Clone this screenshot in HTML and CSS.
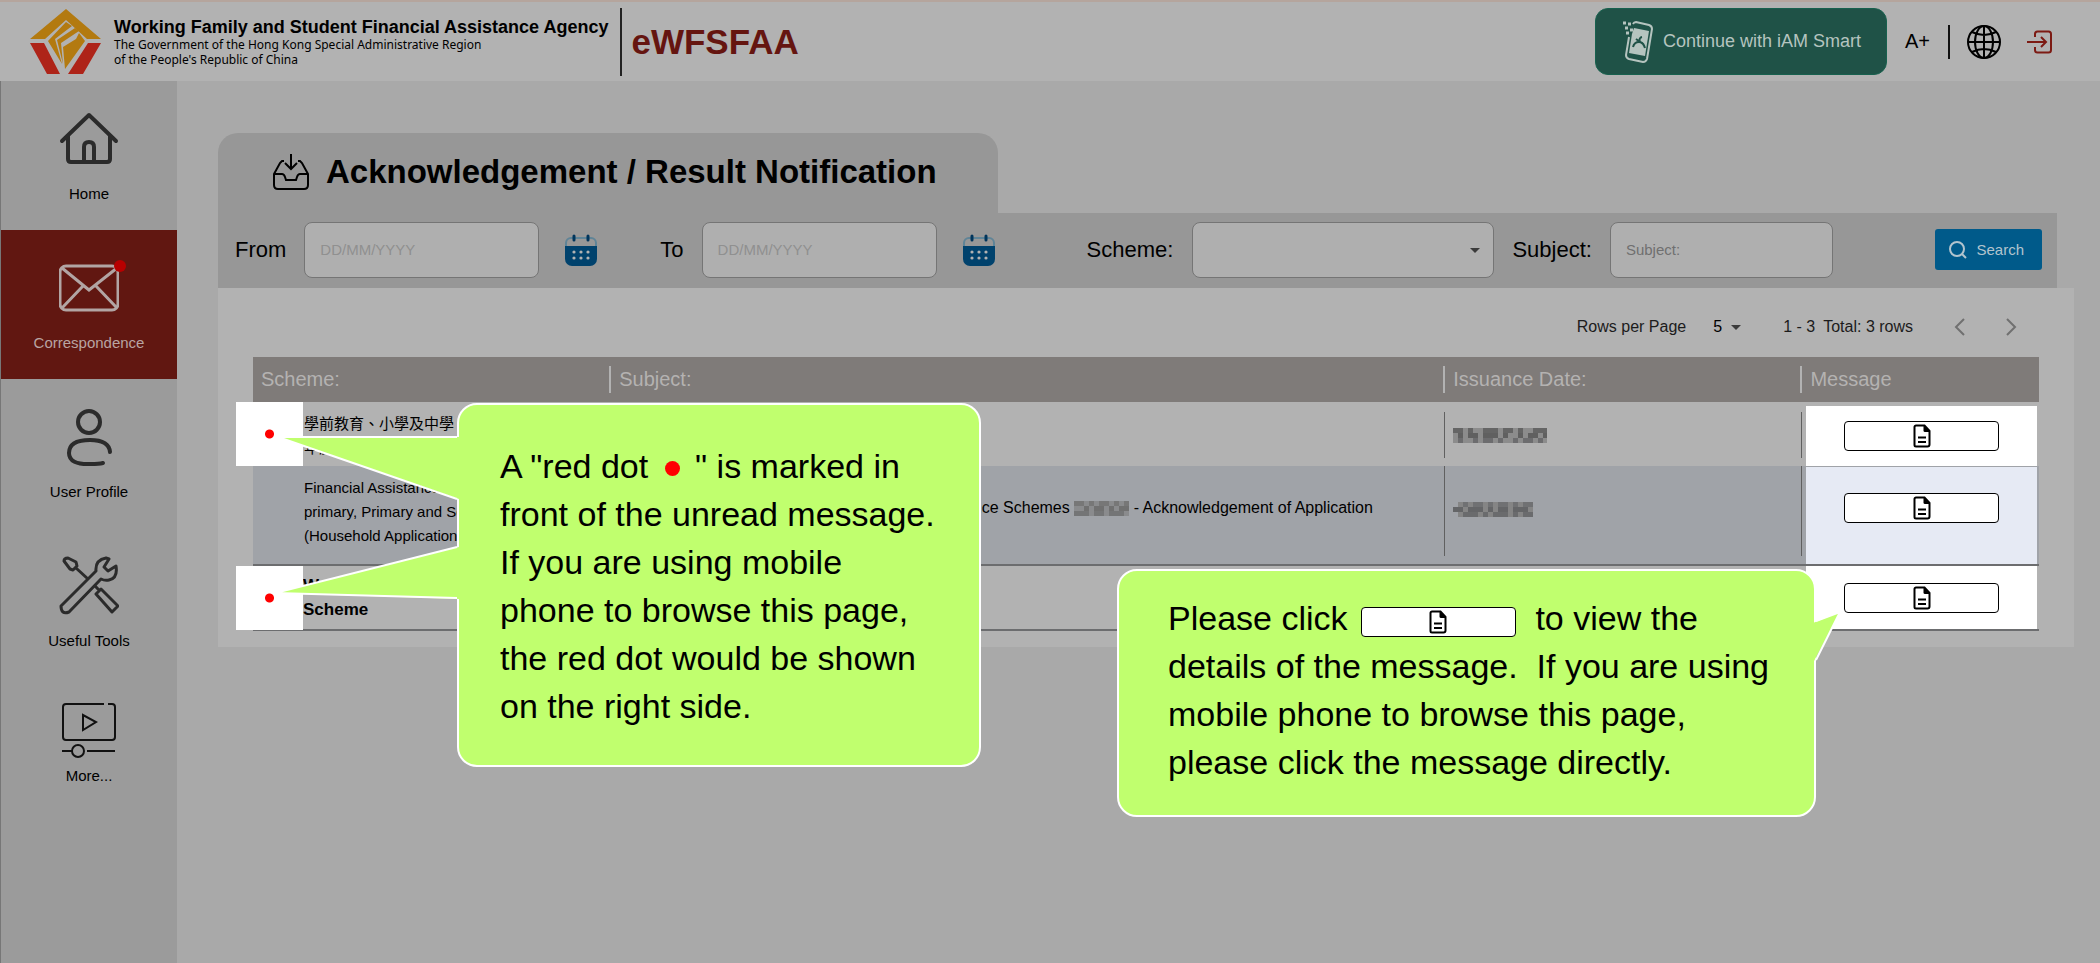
FILE: index.html
```html
<!DOCTYPE html>
<html lang="en">
<head>
    <meta charset="UTF-8">
    <title>eWFSFAA</title>
    <link rel="stylesheet" href="styles.css">
</head>
<body>

<svg class="defs" width="0" height="0">
    <symbol id="doc" viewBox="0 0 18 24">
        <path d="M3 1.500h8.500L16.500 7v13.500a2 2 0 0 1-2 2H3a1.500 1.500 0 0 1-1.500-1.500V3A1.500 1.500 0 0 1 3 1.500z" fill="none" stroke="#000" stroke-width="2"/>
        <path d="M10.500 1l6.500 7h-5a1.500 1.500 0 0 1-1.500-1.500z"/>
        <path d="M5 13.500h8M5 18h8" stroke="#000" stroke-width="2"/>
    </symbol>
    <symbol id="calendar" viewBox="0 0 32 32">
        <path d="M1 12V9a5 5 0 0 1 5-5h20a5 5 0 0 1 5 5v3" fill="none" stroke="#5f8497" stroke-width="2"/>
        <path d="M0 12h32v13a7 7 0 0 1-7 7H7a7 7 0 0 1-7-7z" fill="#00426d"/>
        <path d="M9 2v4M23 2v4" stroke="#00355c" stroke-width="3" stroke-linecap="round"/>
        <g fill="#b2b2b2"><circle cx="9" cy="18" r="1.600"/><circle cx="16" cy="18" r="1.600"/><circle cx="23" cy="18" r="1.600"/><circle cx="9" cy="24" r="1.600"/><circle cx="16" cy="24" r="1.600"/><circle cx="23" cy="24" r="1.600"/></g>
    </symbol>
</svg>

<header class="topbar">
    <svg class="logo" viewBox="0 0 72 66" width="72" height="66">
        <path d="M37 0L72 30H58L37 11L16 30H1z" fill="#b37a10"/>
        <path d="M1 34h14l16 31H18zM72 34H59L39 65h15z" fill="#ae2419"/>
        <path d="M37 13l6 4-17 13 7 25-14-23zM46 19l4 3-18 12 2 21-6-24zM50 24l6 8-20 28-2-22 13-8z" fill="#b37a10"/>
    </svg>
    <div class="agency">
        <strong>Working Family and Student Financial Assistance Agency</strong>
        <span>The Government of the Hong Kong Special Administrative Region</span>
        <span>of the People's Republic of China</span>
    </div>
    <div class="brand">eWFSFAA</div>
    <div class="top-actions">
        <button class="iam-btn">
            <svg viewBox="0 0 30 42" width="30" height="42" fill="none" stroke="#b5c4bf" stroke-width="2">
                <path d="M10 3q1-2 3-2l13 3q3 1 3 4l-5 30q-1 3-4 3L6 38q-3-1-3-4l3-18"/>
                <path d="M11 7l15 3-4 25-16-3 3-19z" fill="#b5c4bf" stroke="none"/>
                <path d="M10 26c1-4 4-5 6-5 4 0 5 3 6 6M13 18l7 5M19 16a3 3 0 1 0 1 6" stroke="#1f5247"/>
                <path d="M0 2h3M5 3h3M2 7h3M7 9h3M3 12h3" stroke-width="3"/>
                <path d="M11 36h5" stroke="#1f5247"/>
            </svg>
            Continue with iAM Smart
        </button>
        <button class="font-btn">A+</button>
        <button class="icon-btn globe" aria-label="Language">
            <svg viewBox="0 0 34 34" width="34" height="34" fill="none" stroke="#000" stroke-width="2">
                <circle cx="17" cy="17" r="16"/><ellipse cx="17" cy="17" rx="9" ry="16"/>
                <path d="M17 1v32M1 17h32M5 7q12 6 24 0M5 27q12-6 24 0"/>
            </svg>
        </button>
        <button class="icon-btn" aria-label="Logout">
            <svg viewBox="0 0 26 24" width="26" height="24" fill="none" stroke="#7c1a13" stroke-width="2">
                <path d="M8 7V4a2.500 2.500 0 0 1 2.500-2.500h11A2.500 2.500 0 0 1 24 4v16a2.500 2.500 0 0 1-2.500 2.500h-11A2.500 2.500 0 0 1 8 20v-3M0 12h19M14 7l5 5-5 5"/>
            </svg>
        </button>
    </div>
</header>

<div class="layout">
    <nav class="sidebar">
        <a href="#" class="nav-item">
            <svg viewBox="0 0 60 60" width="60" height="60" fill="none" stroke="#2b2b2b" stroke-width="4" stroke-linecap="round" stroke-linejoin="round">
                <path d="M3 32L30 6l27 26M9 27v23q0 3 3 3h36q3 0 3-3V27M25 53V38q0-5 5-5t5 5v15"/>
            </svg>
            Home
        </a>
        <a href="#" class="nav-item active">
            <svg viewBox="0 0 60 60" width="60" height="60" fill="none" stroke="#b2a5a4" stroke-width="3">
                <rect x="1" y="8" width="58" height="44" rx="6"/>
                <path d="M3 10l27 22L58 10M3 50l21-22M58 50L37 28"/>
            </svg>
            <i class="badge"></i>
            Correspondence
        </a>
        <a href="#" class="nav-item">
            <svg viewBox="0 0 60 60" width="60" height="60" fill="none" stroke="#2b2b2b" stroke-width="4" stroke-linecap="round">
                <circle cx="30" cy="15" r="11"/>
                <path d="M51 45q-1-12-20-12-21 0-21 13 0 12 22 11 8 0 12-1"/>
            </svg>
            User Profile
        </a>
        <a href="#" class="nav-item">
            <svg viewBox="0 0 60 60" width="60" height="60" fill="none" stroke="#2b2b2b" stroke-width="3" stroke-linejoin="round">
                <path d="M2 50L37 15Q36 4 47 2l3 1-5 8 4 4 8-5q2 12-7 14-4 1-8-1L10 56q-8 3-8-6z"/>
                <path d="M5 5q0-3 4-3l8 4 1 4-4 4-3-1zM17 12l12 11M35 29l5 5M37 38l5-5 17 17-6 6z"/>
            </svg>
            Useful Tools
        </a>
        <a href="#" class="nav-item more">
            <svg viewBox="0 0 60 60" width="60" height="60" fill="none" stroke="#111" stroke-width="2">
                <path d="M45 3H7Q4 3 4 6v30q0 3 3 3h46q3 0 3-3V6q0-3-3-3h-4M24 14v15l13-8zM3 50h10M28 50h28"/>
                <circle cx="19" cy="50" r="6"/>
            </svg>
            More...
        </a>
    </nav>

    <main>
        <h1 class="tab">
            <svg viewBox="0 0 36 36" width="36" height="36" fill="none" stroke="#000" stroke-width="2">
                <path d="M11 7H9L7 9 1 20v11q0 4 4 4h26q4 0 4-4V20L29 9l-2-2h-2M1 20h8q2 0 3 3l1 3h10l1-3q1-3 3-3h8M18 0v15M12 9l6 6 6-6"/>
            </svg>
            Acknowledgement / Result Notification
        </h1>

        <form class="filters">
            <label for="from">From</label>
            <input type="text" id="from" class="date" placeholder="DD/MM/YYYY">
            <button type="button" class="cal" aria-label="Pick from date"><svg width="32" height="32"><use href="#calendar"/></svg></button>
            <label for="to">To</label>
            <input type="text" id="to" class="date" placeholder="DD/MM/YYYY">
            <button type="button" class="cal cal-to" aria-label="Pick to date"><svg width="32" height="32"><use href="#calendar"/></svg></button>
            <label for="scheme">Scheme:</label>
            <div class="select-wrap scheme-wrap"><select id="scheme"><option></option></select></div>
            <label for="subject">Subject:</label>
            <input type="text" id="subject" placeholder="Subject:">
            <button type="button" class="search">
                <svg viewBox="0 0 18 18" width="18" height="18" fill="none" stroke="#b2c4ce" stroke-width="2"><circle cx="8" cy="8" r="7"/><path d="M13 13l4 4"/></svg>
                Search
            </button>
        </form>

        <section class="panel">
            <div class="pager">
                <label for="rows">Rows per Page</label>
                <div class="select-wrap rows-wrap"><select id="rows"><option>5</option></select></div>
                <span class="range">1 - 3</span>
                <span>Total: 3 rows</span>
                <button class="prev" aria-label="Previous page"><svg viewBox="0 0 12 18" width="12" height="18"><path d="M10 1L2 9l8 8"/></svg></button>
                <button class="next" aria-label="Next page"><svg viewBox="0 0 12 18" width="12" height="18"><path d="M2 1l8 8-8 8"/></svg></button>
            </div>

            <div class="table-wrap">
                <table>
                    <thead>
                        <tr><th class="c1">Scheme:</th><th class="c2">Subject:</th><th class="c3">Issuance Date:</th><th class="c4">Message</th></tr>
                    </thead>
                    <tbody>
                        <tr class="first">
                            <td class="scheme"><i class="spot"></i><span lang="zh-HK">學前教育、小學及中學<br>年度申請</span></td>
                            <td></td>
                            <td class="issued"><svg class="mosaic" viewBox="0 0 94 15" width="94" height="15" fill="none" stroke-width="5">
                                <path d="M0 2.500h94M0 7.500h94M0 12.500h94" stroke="#8c8c8c"/>
                                <path d="M0 2.500h94" stroke="#656565" stroke-dasharray="10 5 5 10 15 5"/>
                                <path d="M5 7.500h89" stroke="#606060" stroke-dasharray="5 5 10 5 15 5 5 10"/>
                                <path d="M5 12.500h89" stroke="#6c6c6e" stroke-dasharray="5 10 5 5 10 5"/>
                            </svg></td>
                            <td class="msg"><div><button aria-label="View message"><svg width="18" height="24"><use href="#doc"/></svg></button></div></td>
                        </tr>
                        <tr class="alt">
                            <td class="scheme">Financial Assistance Schemes for Pre-primary, Primary and Secondary Students (Household Application)</td>
                            <td class="subject">Pre-primary, Primary and Secondary Student Finance Schemes
                                <svg class="mosaic" viewBox="0 0 55 15" width="55" height="15" fill="none" stroke-width="5">
                                    <path d="M0 2.500h55M0 7.500h55M0 12.500h55" stroke="#8a8b8d"/>
                                    <path d="M0 2.500h55" stroke="#777" stroke-dasharray="10 5 5 5"/>
                                    <path d="M10 7.500h45" stroke="#707070" stroke-dasharray="5 5 10 5"/>
                                    <path d="M0 12.500h55" stroke="#747576" stroke-dasharray="15 5 10 5"/>
                                </svg>
                                - Acknowledgement of Application</td>
                            <td class="issued"><svg class="mosaic" viewBox="0 0 80 15" width="80" height="15" fill="none" stroke-width="5">
                                <path d="M5 2.500h75M0 7.500h80M5 12.500h75" stroke="#858585"/>
                                <path d="M10 2.500h70" stroke="#707173" stroke-dasharray="5 5 10 5"/>
                                <path d="M0 7.500h80" stroke="#646567" stroke-dasharray="10 5 15 5 5 5"/>
                                <path d="M10 12.500h70" stroke="#6a6b6d" stroke-dasharray="15 5 5 5"/>
                            </svg></td>
                            <td class="msg"><div><button aria-label="View message"><svg width="18" height="24"><use href="#doc"/></svg></button></div></td>
                        </tr>
                        <tr class="last">
                            <td class="scheme unread"><i class="spot"></i>Working Family Allowance<br>Scheme</td>
                            <td></td>
                            <td></td>
                            <td class="msg"><div><button aria-label="View message"><svg width="18" height="24"><use href="#doc"/></svg></button></div></td>
                        </tr>
                    </tbody>
                </table>

                <div class="bubble bubble-dot">
                    <svg class="tail" viewBox="0 0 186 170" width="186" height="170">
                        <path d="M184 5H3l181 62zM184 115L0 161l184 6z" fill="#c0ff6e"/>
                        <path d="M182 5H3l179 62M182 115L0 161l182 5" fill="none" stroke="#fff" stroke-width="2"/>
                    </svg>
                    A "red dot <i class="dot"></i> " is marked in<br>front of the unread message.<br>If you are using mobile<br>phone to browse this page,<br>the red dot would be shown<br>on the right side.
                </div>

                <div class="bubble bubble-click">
                    <svg class="tail" viewBox="0 0 32 54" width="32" height="54">
                        <path d="M0 12L27 1 0 52z" fill="#c0ff6e"/>
                        <path d="M3 10L27 1 3 49" fill="none" stroke="#fff" stroke-width="2"/>
                    </svg>
                    Please click <span class="sample"><svg width="18" height="24"><use href="#doc"/></svg></span> to view the<br>details of the message.&nbsp; If you are using<br>mobile phone to browse this page,<br>please click the message directly.
                </div>
            </div>
        </section>
    </main>
</div>

</body>
</html>
```
FILE: styles.css
```css
:root {
    --page: #a9a9a9;
    --panel: #b2b2b2;
    --bar: #979797;
    --side: #9b9b9b;
    --head: #7f7b79;
    --alt: #a0a3a8;
    --active: #611711;
    --green: #1f5247;
    --blue: #005a8a;
    --bubble: #c0ff6e;
    --red: #ff0000;
}

* {
    box-sizing: border-box;
}

body {
    margin: 0;
    min-height: 100vh;
    display: flex;
    flex-direction: column;
    background: var(--page);
    color: #000;
    font-family: "Liberation Sans", "Noto Sans CJK TC", Arial, sans-serif;
    font-size: 15px;
}

button, input, select {
    font-family: inherit;
    font-size: 15px;
}

button {
    padding: 0;
    border: none;
    background: none;
    color: inherit;
    cursor: pointer;
}

svg {
    display: block;
    flex: none;
}

.defs {
    position: absolute;
}

/* top bar */
.topbar {
    display: flex;
    align-items: center;
    height: 81px;
    padding: 0 47px 0 29px;
    border-top: 2px solid #b5a59d;
    background: var(--panel);
}

.agency {
    display: flex;
    flex-direction: column;
    margin-left: 13px;
    font-family: "Noto Sans", sans-serif;
    font-size: 12px;
    line-height: 15px;
}

.agency strong {
    font-family: "Liberation Sans", Arial, sans-serif;
    font-size: 18px;
    line-height: 20px;
}

.brand {
    margin-left: 12px;
    padding-left: 9px;
    border-left: 2px solid #222;
    color: #651510;
    font-size: 35px;
    font-weight: bold;
    line-height: 68px;
}

.top-actions {
    display: flex;
    align-items: center;
    margin-left: auto;
}

.iam-btn {
    display: flex;
    align-items: center;
    gap: 10px;
    height: 67px;
    padding: 0 25px 0 27px;
    border: 1px solid #17614e;
    border-radius: 13px;
    background: var(--green);
    color: #b5c4bf;
    font-size: 18px;
}

.font-btn {
    height: 34px;
    margin-left: 18px;
    padding-right: 18px;
    border-right: 2px solid #111;
    font-size: 20px;
}

.globe {
    margin: 0 26px 0 17px;
}

/* side menu */
.layout {
    display: flex;
    flex: 1;
}

.sidebar {
    width: 177px;
    flex: none;
    border-left: 1px solid #777;
    background: var(--side);
}

.nav-item {
    position: relative;
    display: flex;
    flex-direction: column;
    align-items: center;
    gap: 15px;
    height: 149px;
    padding-top: 28px;
    color: #000;
    line-height: 20px;
    text-decoration: none;
}

.nav-item.active {
    background: var(--active);
    color: #b9a4a2;
}

.nav-item.more {
    gap: 5px;
    padding-top: 24px;
}

.badge {
    position: absolute;
    top: 30px;
    left: 113px;
    width: 12px;
    height: 12px;
    border-radius: 50%;
    background: #b70000;
}

/* content */
main {
    flex: 1;
    min-width: 0;
    padding: 52px 26px 0 41px;
}

.tab {
    display: flex;
    align-items: center;
    gap: 17px;
    width: 780px;
    height: 80px;
    margin: 0;
    padding: 0 0 2px 55px;
    border-radius: 20px 20px 0 0;
    background: var(--bar);
    font-size: 33px;
}

.filters {
    display: flex;
    align-items: center;
    height: 75px;
    margin-right: 17px;
    padding: 0 15px 2px 17px;
    background: var(--bar);
}

.filters label {
    font-size: 22px;
}

.filters input, .filters select {
    height: 56px;
    padding: 0 15px;
    border: 1px solid #757575;
    border-radius: 8px;
    background: #afafaf;
}

.filters input {
    margin-left: 18px;
}

.filters input::placeholder {
    color: #707070;
    opacity: 1;
}

.filters .date {
    width: 235px;
}

.filters .date::placeholder {
    color: #909090;
}

.cal {
    margin: 0 63px 0 26px;
}

.filters .cal-to {
    margin-right: 92px;
}

.select-wrap {
    position: relative;
}

.select-wrap::after {
    content: "";
    position: absolute;
    top: 50%;
    right: 14px;
    margin-top: -2px;
    border: 5px solid transparent;
    border-top-color: #3b3b3b;
    border-bottom: none;
    pointer-events: none;
}

select {
    appearance: none;
}

.scheme-wrap {
    width: 302px;
    margin: 0 18px 0 19px;
}

.scheme-wrap select {
    width: 100%;
}

#subject {
    width: 223px;
}

.search {
    display: flex;
    align-items: center;
    gap: 9px;
    height: 41px;
    margin-left: auto;
    padding: 0 18px 0 14px;
    border-radius: 3px;
    background: var(--blue);
    color: #b2c4ce;
}

.panel {
    padding: 20px 35px 16px;
    background: var(--panel);
}

.pager {
    display: flex;
    align-items: center;
    justify-content: flex-end;
    height: 38px;
    margin-bottom: 11px;
    padding-right: 22px;
    color: #1c1c1c;
}

.pager, .rows-wrap select {
    font-size: 16px;
}

.rows-wrap {
    margin: 0 42px 0 27px;
}

.rows-wrap::after {
    right: 0;
}

.rows-wrap select {
    width: 28px;
    padding: 0;
    border: none;
    background: none;
}

.range {
    margin-right: 8px;
}

.pager path {
    fill: none;
    stroke: #707070;
    stroke-width: 2;
}

.prev {
    margin: 0 39px 0 41px;
}

/* table */
.table-wrap {
    position: relative;
}

table {
    width: 100%;
    border-collapse: collapse;
    table-layout: fixed;
    line-height: 24px;
}

th {
    position: relative;
    height: 45px;
    padding: 0 8px 2px;
    background: var(--head);
    color: #b4b2b1;
    font-size: 20px;
    font-weight: normal;
    text-align: left;
}

.c1 { width: 20%; }
.c2 { width: 46.700%; }
.c3 { width: 20%; }
.c4 { width: 13.300%; }

th + th {
    padding-left: 9px;
}

th + th::before {
    content: "";
    position: absolute;
    top: 9px;
    bottom: 9px;
    left: -1px;
    width: 2px;
    background: #b2b2b2;
}

td {
    position: relative;
    height: 64px;
    padding: 0 9px;
}

td + td::before {
    content: "";
    position: absolute;
    top: 10px;
    bottom: 8px;
    left: 0;
    width: 1px;
    background: #606060;
}

.alt {
    background: var(--alt);
}

.alt td {
    height: 99px;
    padding-bottom: 14px;
    border-bottom: 2px solid #6c6d6f;
}

.alt td::before {
    top: 0;
}

.last td {
    height: 65px;
    border-bottom: 2px solid #6c6d6f;
}

td.scheme {
    padding-left: 51px;
}

.first td.scheme {
    padding-top: 4px;
}

.alt td.scheme {
    padding-bottom: 6px;
}

td.unread {
    padding-left: 50px;
    font-weight: bold;
    font-size: 17px;
}

.subject {
    font-size: 16px;
    white-space: nowrap;
}

.mosaic {
    display: inline-block;
    vertical-align: middle;
}

.spot {
    position: absolute;
    top: 0;
    left: -17px;
    width: 67px;
    height: 64px;
    background: radial-gradient(circle, var(--red) 4px, #fff 5px);
}

td.msg, .alt td.msg {
    height: 1px;
    padding: 0 2px 0 5px;
}

.msg div {
    display: flex;
    align-items: center;
    justify-content: center;
    height: 63px;
    background: #fff;
}

.first td.msg {
    padding-top: 4px;
}

.first .msg div {
    height: 60px;
}

.alt .msg div {
    height: 97px;
    padding-bottom: 14px;
    background: #e6eaf4;
}

.msg button, .sample {
    display: inline-flex;
    align-items: center;
    justify-content: center;
    width: 155px;
    height: 30px;
    border: 1px solid #000;
    border-radius: 4px;
    background: #fff;
}

/* help bubbles */
.bubble {
    position: absolute;
    border: 2px solid #fff;
    border-radius: 20px;
    background: var(--bubble);
    font-size: 34px;
    line-height: 48px;
    white-space: nowrap;
}

.bubble-dot {
    top: 46px;
    left: 204px;
    width: 524px;
    padding: 37px 41px 35px;
}

.bubble-click {
    top: 212px;
    right: 223px;
    width: 699px;
    padding: 23px 49px 29px;
}

.tail {
    position: absolute;
}

.bubble-dot .tail {
    top: 27px;
    right: 518px;
}

.bubble-click .tail {
    top: 40px;
    left: 694px;
}

.dot {
    display: inline-block;
    width: 15px;
    height: 15px;
    margin: 0 6px 2px 7px;
    border-radius: 50%;
    background: var(--red);
}

.sample {
    margin: 0 10px 0 4px;
    vertical-align: -4px;
}
```
